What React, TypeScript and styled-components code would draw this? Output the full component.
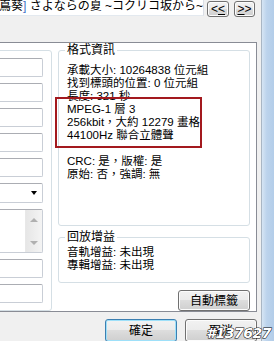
import React from 'react';
import styled, { createGlobalStyle } from 'styled-components';

const Global = createGlobalStyle`
  html, body { margin: 0; padding: 0; }
  body {
    width: 274px; height: 341px; overflow: hidden;
    background: #f0f0f0;
    font-family: "Liberation Sans", "Noto Sans CJK TC", sans-serif;
    font-size: 11.5px; color: #000;
  }
`;

const Window = styled.div`
  position: relative;
  display: flex;
  width: 274px;
  height: 341px;
  overflow: hidden;
`;

const Dialog = styled.div`
  flex: 1;
  min-width: 0;
  display: flex;
  flex-direction: column;
  background: #f0f0f0;
  border-right: 1px solid #a9b6c4;
`;

const Frame = styled.div`
  width: 12px;
  flex: none;
  background: linear-gradient(to right, #d6e5f4, #bcd3ec 40%, #b3cde9);
`;

const TopRow = styled.div`
  display: flex;
  align-items: flex-start;
  height: 17px;
  padding-right: 6px;
`;

const TitleField = styled.div`
  flex: 1;
  min-width: 0;
  box-sizing: border-box;
  height: 20px;
  margin: -4px 3px 0 -20px;
  padding-left: 6px;
  background: #fff;
  border: 1px solid #abadb3;
  border-right-color: #dbdfe6;
  border-bottom-color: #e3e9ef;
  font-size: 12px;
  line-height: 19px;
  white-space: nowrap;
  overflow: hidden;
`;

const Caret = styled.span`
  color: #3f74c8;
`;

const Btn = styled.button<{ $w: number; $h: number; $default?: boolean }>`
  box-sizing: border-box;
  width: ${p => p.$w}px;
  height: ${p => p.$h}px;
  flex: none;
  padding: 0;
  font-family: inherit;
  font-size: 12px;
  line-height: 1;
  color: #000;
  border-radius: 3px;
  border: 1px solid ${p => (p.$default ? '#3c7fb1' : '#707070')};
  background: linear-gradient(#f2f2f2 0%, #ebebeb 49%, #dddddd 50%, #cfcfcf 100%);
  box-shadow: inset 0 0 0 1px ${p => (p.$default ? '#9ee0f9' : '#fcfcfc')};
`;

const NavBtn = styled(Btn)`
  margin-top: 1px;
  & + & { margin-left: 5px; }
  u { text-decoration: underline; }
`;

const Panel = styled.div`
  display: flex;
  gap: 6px;
  box-sizing: border-box;
  height: 276px;
  margin: 25px 4px 0 -20px;
  padding: 0 6px 0 11px;
  background: #fff;
  border: 1px solid #898c95;
`;

const LeftGroup = styled.div`
  box-sizing: border-box;
  width: 60px;
  height: 261px;
  margin-top: 7px;
  padding: 7px 8px 0 0;
  border: 1px solid #d5dfe5;
  border-radius: 3px;
  display: flex;
  flex-direction: column;
  gap: 6px;
`;

const TextBox = styled.div<{ $h?: number }>`
  box-sizing: border-box;
  position: relative;
  height: ${p => p.$h ?? 19}px;
  flex: none;
  border: 1px solid #c9ced6;
  border-top-color: #abadb3;
  border-radius: 2px;
  background: #fff;
`;

const ComboArrow = styled.span`
  position: absolute;
  right: 5px;
  top: 7px;
  width: 0;
  height: 0;
  border-left: 3.5px solid transparent;
  border-right: 3.5px solid transparent;
  border-top: 4px solid #000;
`;

const ScrollBar = styled.div`
  position: absolute;
  right: 0;
  top: 0;
  bottom: 0;
  width: 17px;
  background: linear-gradient(to right, #e6e6e6, #f4f4f4);
  border-left: 1px solid #e8e8e8;
  display: flex;
  flex-direction: column;
  justify-content: space-between;
  align-items: center;
  padding: 8px 0 7px;
  box-sizing: border-box;
`;

const Arrow = styled.span<{ $up?: boolean }>`
  width: 0;
  height: 0;
  border-left: 4px solid transparent;
  border-right: 4px solid transparent;
  ${p => (p.$up ? 'border-bottom: 4px solid #b0b0b0;' : 'border-top: 4px solid #b0b0b0;')}
`;

const RightCol = styled.div`
  width: 192px;
  flex: none;
  display: flex;
  flex-direction: column;
`;

const Group = styled.fieldset<{ $mt?: number }>`
  margin: ${p => p.$mt ?? 0}px 0 0 0;
  padding: 0;
  border: 1px solid #d5dfe5;
  border-radius: 3px;
  min-width: 0;
`;

const Legend = styled.legend`
  margin-left: 6px;
  padding: 0 2px;
  font-size: 12px;
  line-height: 14px;
`;

const GroupBody = styled.div<{ $h: number; $pt: number }>`
  position: relative;
  box-sizing: border-box;
  height: ${p => p.$h}px;
  padding: ${p => p.$pt}px 0 0 8px;
  line-height: 13px;
  white-space: nowrap;
`;

const Line = styled.div`
  height: 13px;
`;

const Highlight = styled.div`
  position: absolute;
  left: -4px;
  top: 40px;
  width: 147px;
  height: 51px;
  box-sizing: border-box;
  border: 2px solid #a3191e;
`;

const AutoBtn = styled(Btn)`
  align-self: flex-end;
  margin-top: 7px;
`;

const ButtonRow = styled.div`
  display: flex;
  justify-content: flex-end;
  gap: 8px;
  margin-top: 7px;
  padding-right: 4px;
`;

const Watermark = styled.div`
  position: absolute;
  right: 3px;
  bottom: 0px;
  font-family: "DejaVu Sans", sans-serif;
  font-size: 14px;
  font-weight: bold;
  font-style: italic;
  letter-spacing: -0.5px;
  color: #fff;
  -webkit-text-stroke: 1px #000;
  paint-order: stroke fill;
  line-height: 15px;
`;

export default function App() {
  return (
    <>
      <Global />
      <Window>
        <Dialog>
          <TopRow>
            <TitleField>
              手嶌葵<Caret>]</Caret> さよならの夏 ~コクリコ坂から~
            </TitleField>
            <NavBtn $w={22} $h={16}>&lt;<u>&lt;</u></NavBtn>
            <NavBtn $w={21} $h={16}><u>&gt;</u>&gt;</NavBtn>
          </TopRow>
          <Panel>
            <LeftGroup>
              <TextBox />
              <TextBox />
              <TextBox />
              <TextBox />
              <TextBox />
              <TextBox $h={20}><ComboArrow /></TextBox>
              <TextBox $h={44}>
                <ScrollBar>
                  <Arrow $up />
                  <Arrow />
                </ScrollBar>
              </TextBox>
              <TextBox />
              <TextBox />
            </LeftGroup>
            <RightCol>
              <Group>
                <Legend>格式資訊</Legend>
                <GroupBody $h={168} $pt={7}>
                  <Line>承載大小: 10264838 位元組</Line>
                  <Line>找到標頭的位置: 0 位元組</Line>
                  <Line>長度: 321 秒</Line>
                  <Line>MPEG-1 層 3</Line>
                  <Line>256kbit，大約 12279 畫格</Line>
                  <Line>44100Hz 聯合立體聲</Line>
                  <Line />
                  <Line>CRC: 是，版權: 是</Line>
                  <Line>原始: 否，強調: 無</Line>
                  <Highlight />
                </GroupBody>
              </Group>
              <Group $mt={4}>
                <Legend>回放增益</Legend>
                <GroupBody $h={38} $pt={2}>
                  <Line>音軌增益: 未出現</Line>
                  <Line>專輯增益: 未出現</Line>
                </GroupBody>
              </Group>
              <AutoBtn $w={72} $h={21}>自動標籤</AutoBtn>
            </RightCol>
          </Panel>
          <ButtonRow>
            <Btn $w={72} $h={23} $default>確定</Btn>
            <Btn $w={72} $h={23}>取消</Btn>
          </ButtonRow>
        </Dialog>
        <Frame />
        <Watermark>#137627</Watermark>
      </Window>
    </>
  );
}
